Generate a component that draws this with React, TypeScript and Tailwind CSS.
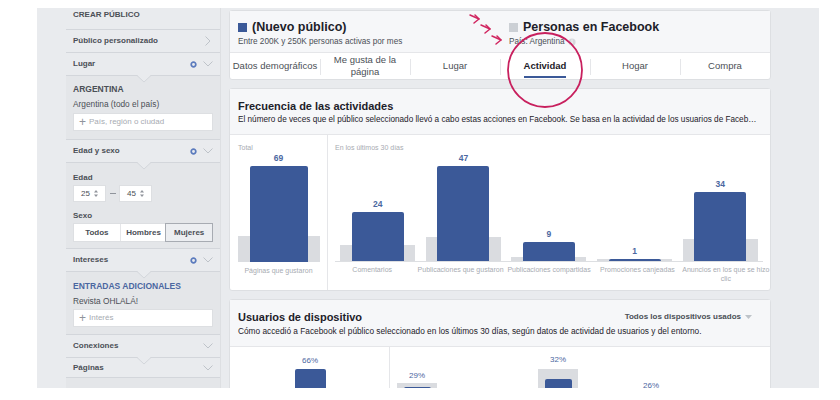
import React from 'react';

type Chevron = 'down' | 'right' | 'none';

function ChevronIcon({ dir }: { dir: Chevron }) {
  if (dir === 'none') return null;
  return dir === 'down' ? (
    <svg width="10" height="6" viewBox="0 0 10 6" className="ml-[6px]">
      <polyline points="0.5,0.5 5,5 9.5,0.5" fill="none" stroke="#bec3c9" strokeWidth="1" />
    </svg>
  ) : (
    <svg width="6" height="10" viewBox="0 0 6 10" className="ml-[6px] mr-[2px]">
      <polyline points="0.5,0.5 5,5 0.5,9.5" fill="none" stroke="#bec3c9" strokeWidth="1" />
    </svg>
  );
}

function Gear() {
  return (
    <svg width="7" height="7" viewBox="0 0 7 7">
      <circle cx="3.5" cy="3.5" r="2.3" fill="none" stroke="#5b7bbd" strokeWidth="1.7" />
    </svg>
  );
}

function SideRow({ label, gear, chevron = 'down', h = 'h-[22px]' }: { label: string; gear?: boolean; chevron?: Chevron; h?: string }) {
  return (
    <div className={`${h} flex items-center px-[7px] text-[8px] font-bold text-[#4b4f56]`}>
      <span className="flex-1">{label}</span>
      {gear && <Gear />}
      <ChevronIcon dir={chevron} />
    </div>
  );
}

// plain divider, or one with a little down-pointing notch over an open panel
function Divider({ notch }: { notch?: boolean }) {
  return (
    <div className="relative h-px bg-[#d3d6db]">
      {notch && (
        <svg width="14" height="8" viewBox="0 0 14 8" className="absolute left-[71px] top-0">
          <polygon points="0,0 7,7 14,0" fill="#e9ebee" />
          <polyline points="0,0.5 7,7 14,0.5" fill="none" stroke="#d3d6db" strokeWidth="1" />
        </svg>
      )}
    </div>
  );
}

function AddInput({ text }: { text: string }) {
  return (
    <div className="h-[18px] bg-white border border-[#dddfe2] flex items-center px-[5px] text-[8px] text-[#a7abb2]">
      <span className="text-[12px] leading-none mr-[3px] text-[#90949c]">+</span>
      {text}
    </div>
  );
}

function Spinner() {
  return (
    <svg width="4" height="7" viewBox="0 0 4 7" className="ml-[4px]">
      <polygon points="2,0 4,2.5 0,2.5" fill="#90949c" />
      <polygon points="0,4.5 4,4.5 2,7" fill="#90949c" />
    </svg>
  );
}

function AgeBox({ v }: { v: string }) {
  return (
    <div className="w-[33px] h-[17px] bg-white border border-[#dddfe2] flex items-center justify-center text-[8px] text-[#4b4f56]">
      {v}
      <Spinner />
    </div>
  );
}

function Sidebar() {
  return (
    <aside className="ml-[29px] w-[155px] border-r border-[#dddfe2] flex flex-col">
      <div className="h-[21px] px-[7px] pt-[2px] text-[8px] leading-[10px] font-bold text-[#4b4f56]">CREAR PÚBLICO</div>
      <Divider />
      <SideRow label="Público personalizado" chevron="right" />
      <Divider />
      <SideRow label="Lugar" gear />
      <Divider notch />
      <div className="bg-[#e4e6e9] px-[7px] pt-[8px] pb-[8px]">
        <div className="text-[8.5px] leading-[11px] font-bold text-[#4b4f56]">ARGENTINA</div>
        <div className="mt-[4px] text-[8.3px] leading-[11px] text-[#4b4f56]">Argentina (todo el país)</div>
        <div className="mt-[3px]">
          <AddInput text="País, región o ciudad" />
        </div>
      </div>
      <Divider />
      <SideRow label="Edad y sexo" gear />
      <Divider notch />
      <div className="bg-[#e4e6e9] px-[7px] pt-[9px] pb-[6px]">
        <div className="text-[8px] leading-[11px] font-bold text-[#4b4f56]">Edad</div>
        <div className="mt-[2px] flex items-center">
          <AgeBox v="25" />
          <div className="w-[13px] flex justify-center">
            <div className="w-[6px] h-px bg-[#90949c]" />
          </div>
          <AgeBox v="45" />
        </div>
        <div className="mt-[8px] text-[8px] leading-[11px] font-bold text-[#4b4f56]">Sexo</div>
        <div className="mt-[2px] h-[19px] flex bg-white border border-[#dddfe2] text-[8px] font-bold text-[#4b4f56]">
          <div className="flex-1 flex items-center justify-center border-r border-[#e5e6e9]">Todos</div>
          <div className="flex-1 flex items-center justify-center">Hombres</div>
          <div className="flex-1 flex items-center justify-center bg-[#eceef1] border border-[#a7abb2] -m-px">Mujeres</div>
        </div>
      </div>
      <Divider />
      <SideRow label="Intereses" gear />
      <Divider notch />
      <div className="bg-[#e4e6e9] px-[7px] pt-[9px] pb-[7px]">
        <div className="text-[8.5px] leading-[11px] font-bold text-[#4b67a1]">ENTRADAS ADICIONALES</div>
        <div className="mt-[4px] text-[8.3px] leading-[11px] text-[#4b4f56]">Revista OHLALÁ!</div>
        <div className="mt-[2px]">
          <AddInput text="Interés" />
        </div>
      </div>
      <Divider />
      <SideRow label="Conexiones" />
      <Divider notch />
      <SideRow label="Páginas" h="h-[19px]" />
      <Divider />
      <div className="flex-1 bg-[#e4e6e9]" />
    </aside>
  );
}

// three hand-drawn arrow marks pointing at the tab
function PinkArrows() {
  return (
    <svg width="44" height="36" viewBox="0 0 44 36" className="absolute left-[238px] top-[2px]">
      <g fill="none" stroke="#d0255f" strokeWidth="1.5" strokeLinecap="round" strokeLinejoin="round">
        <polyline points="2,2 11,6" />
        <polyline points="7,2 11,6 6,10" />
        <polyline points="13,12 22,16" />
        <polyline points="18,12 22,16 17,20" />
        <polyline points="24,23 33,27" />
        <polyline points="29,23 33,27 28,31" />
      </g>
    </svg>
  );
}

const TABS = ['Datos demográficos', 'Me gusta de la página', 'Lugar', 'Actividad', 'Hogar', 'Compra'];

function HeaderCard() {
  return (
    <div className="relative bg-white border border-[#dddfe2] rounded-[3px]">
      <div className="h-[42px] bg-[#f6f7f9] border-b border-[#e5e6e9] flex pl-[8px] pt-[9px]">
        <div className="w-[271px]">
          <div className="flex items-center h-[15px]">
            <div className="w-[9px] h-[9px] bg-[#3b5998] mr-[5px]" />
            <span className="text-[12.5px] font-bold text-[#1d2129]">(Nuevo público)</span>
          </div>
          <div className="mt-[2px] text-[8.2px] leading-[10px] text-[#4b4f56]">Entre 200K y 250K personas activas por mes</div>
        </div>
        <div>
          <div className="flex items-center h-[15px]">
            <div className="w-[9px] h-[9px] bg-[#ccd0d5] mr-[5px]" />
            <span className="text-[12.5px] font-bold text-[#1d2129]">Personas en Facebook</span>
          </div>
          <div className="mt-[2px] flex items-center text-[8.2px] leading-[10px] text-[#4b4f56]">
            País: Argentina
            <svg width="8" height="8" viewBox="0 0 8 8" className="ml-[3px]">
              <circle cx="4" cy="4" r="3.6" fill="#d6d9dd" />
              <rect x="3.5" y="3.3" width="1" height="3" fill="#fff" />
              <rect x="3.5" y="1.7" width="1" height="1" fill="#fff" />
            </svg>
          </div>
        </div>
      </div>
      <div className="h-[26px] flex">
        {TABS.map((t, i) => (
          <div key={t} className="relative flex-1 flex items-center justify-center">
            {i > 0 && <div className="absolute left-0 top-[6px] h-[16px] w-px bg-[#e5e6e9]" />}
            {t === 'Actividad' ? (
              <div className="h-full flex flex-col items-center justify-center relative">
                <span className="text-[9.5px] font-bold text-[#1d2129]">{t}</span>
                <div className="absolute bottom-[1px] left-0 right-0 h-[2px] bg-[#3b5998]" />
              </div>
            ) : (
              <span className="text-[9.5px] leading-[12px] text-center text-[#4b4f56] px-[9px] first:whitespace-nowrap">
                {i === 0 ? <span className="whitespace-nowrap -mx-[8px] inline-block">{t}</span> : t}
              </span>
            )}
          </div>
        ))}
      </div>
      <PinkArrows />
      <svg width="80" height="80" viewBox="0 0 80 80" className="absolute left-[275px] top-[19px] pointer-events-none">
        <ellipse cx="40" cy="40" rx="37" ry="37" fill="none" stroke="#c8205e" strokeWidth="1.8" />
      </svg>
    </div>
  );
}

type Activity = { label: string; value: string; gray: number; blue: number };

const TOTAL: Activity = { label: 'Páginas que gustaron', value: '69', gray: 26, blue: 96 };

const RECENT: Activity[] = [
  { label: 'Comentarios', value: '24', gray: 16, blue: 49 },
  { label: 'Publicaciones que gustaron', value: '47', gray: 24, blue: 96 },
  { label: 'Publicaciones compartidas', value: '9', gray: 4, blue: 19 },
  { label: 'Promociones canjeadas', value: '1', gray: 2, blue: 2 },
  { label: 'Anuncios en los que se hizo clic', value: '34', gray: 22, blue: 69 },
];

function Bar({ a, w, bw }: { a: Activity; w: string; bw: string }) {
  return (
    <div className={`relative ${w} h-full flex flex-col items-center justify-end`}>
      <div className="absolute inset-x-0 bottom-0 bg-[#dadce0]" style={{ height: a.gray }} />
      <div className="relative text-[8.5px] leading-[10px] font-bold text-[#4b67a1] mb-[3px]">{a.value}</div>
      <div className={`relative ${bw} bg-[#3b5998] rounded-t-[2px]`} style={{ height: a.blue }} />
    </div>
  );
}

function ActivityCard() {
  return (
    <div className="bg-white border border-[#dddfe2] rounded-[3px]">
      <div className="h-[46px] bg-[#f6f7f9] border-b border-[#e5e6e9] px-[8px] pt-[10px]">
        <div className="text-[11px] leading-[14px] font-bold text-[#1d2129]">Frecuencia de las actividades</div>
        <div className="mt-[1px] text-[8.2px] leading-[11px] text-[#1d2129] truncate pr-[2px]">
          El número de veces que el público seleccionado llevó a cabo estas acciones en Facebook. Se basa en la actividad de los usuarios de Facebook y en los datos del entorno.
        </div>
      </div>
      <div className="h-[155px] flex">
        <div className="w-[98px] border-r border-[#e5e6e9] flex flex-col">
          <div className="h-[18px] pl-[8px] pt-[8px] text-[7px] leading-[9px] text-[#a7abb2]">Total</div>
          <div className="h-[109px] flex justify-center">
            <Bar a={TOTAL} w="w-[82px]" bw="w-[58px]" />
          </div>
          <div className="mt-[4px] text-[7px] leading-[9px] text-center text-[#a7abb2]">{TOTAL.label}</div>
        </div>
        <div className="flex-1 flex flex-col">
          <div className="h-[18px] pl-[7px] pt-[8px] text-[7px] leading-[9px] text-[#a7abb2]">En los últimos 30 días</div>
          <div className="h-[109px] mx-[7px] flex border-b border-[#dddfe2]">
            {RECENT.map((a) => (
              <div key={a.label} className="flex-1 flex justify-center">
                <Bar a={a} w="w-[75px]" bw="w-[52px]" />
              </div>
            ))}
          </div>
          <div className="flex">
            {RECENT.map((a) => (
              <div key={a.label} className="flex-1 mt-[3px] text-[7px] leading-[9px] text-center text-[#a7abb2]">
                {a.label}
              </div>
            ))}
          </div>
        </div>
      </div>
    </div>
  );
}

function DeviceCard() {
  return (
    <div className="bg-white border border-[#dddfe2] rounded-[3px] h-[120px]">
      <div className="h-[47px] bg-[#f6f7f9] border-b border-[#e5e6e9] px-[8px] pt-[10px]">
        <div className="flex items-center">
          <div className="flex-1 text-[11px] leading-[14px] font-bold text-[#1d2129]">Usuarios de dispositivo</div>
          <div className="text-[8px] font-bold text-[#4b4f56]">Todos los dispositivos usados</div>
          <svg width="7" height="4" viewBox="0 0 7 4" className="ml-[4px] mr-[10px]">
            <polygon points="0,0 7,0 3.5,4" fill="#bec3c9" />
          </svg>
        </div>
        <div className="mt-[2px] text-[8.3px] leading-[11px] text-[#1d2129]">
          Cómo accedió a Facebook el público seleccionado en los últimos 30 días, según datos de actividad de usuarios y del entorno.
        </div>
      </div>
      <div className="flex h-[80px]">
        <div className="w-[160px] border-r border-[#e5e6e9] flex flex-col items-center pt-[9px] pl-[1px]">
          <div className="text-[8px] leading-[10px] text-[#4b67a1]">66%</div>
          <div className="mt-[3px] w-[31px] h-[40px] bg-[#3b5998] rounded-t-[2px]" />
        </div>
        <div className="flex items-start">
          <div className="ml-[7px] w-[40px] flex flex-col items-center pt-[24px]">
            <div className="text-[8px] leading-[10px] text-[#4b67a1]">29%</div>
            <div className="mt-[2px] w-[40px] h-[40px] bg-[#dadce0] flex justify-center pt-[4px]">
              <div className="w-[27px] h-full bg-[#3b5998] rounded-t-[2px]" />
            </div>
          </div>
          <div className="ml-[101px] w-[40px] flex flex-col items-center pt-[8px]">
            <div className="text-[8px] leading-[10px] text-[#4b67a1]">32%</div>
            <div className="mt-[4px] w-[40px] h-[40px] bg-[#dadce0] flex justify-center pt-[10px]">
              <div className="w-[27px] h-full bg-[#3b5998] rounded-t-[2px]" />
            </div>
          </div>
          <div className="ml-[53px] w-[40px] flex flex-col items-center pt-[34px]">
            <div className="text-[8px] leading-[10px] text-[#4b67a1]">26%</div>
          </div>
        </div>
      </div>
    </div>
  );
}

export default function App() {
  return (
    <div className="w-[840px] h-[400px] bg-white pt-[8px] pl-[37px] font-['Liberation_Sans',Arial,sans-serif]">
      <div className="w-[782px] h-[380px] bg-[#e9ebee] flex overflow-hidden">
        <Sidebar />
        <main className="ml-[8px] w-[542px] pt-[2px] flex flex-col gap-[8px]">
          <HeaderCard />
          <ActivityCard />
          <DeviceCard />
        </main>
      </div>
    </div>
  );
}
